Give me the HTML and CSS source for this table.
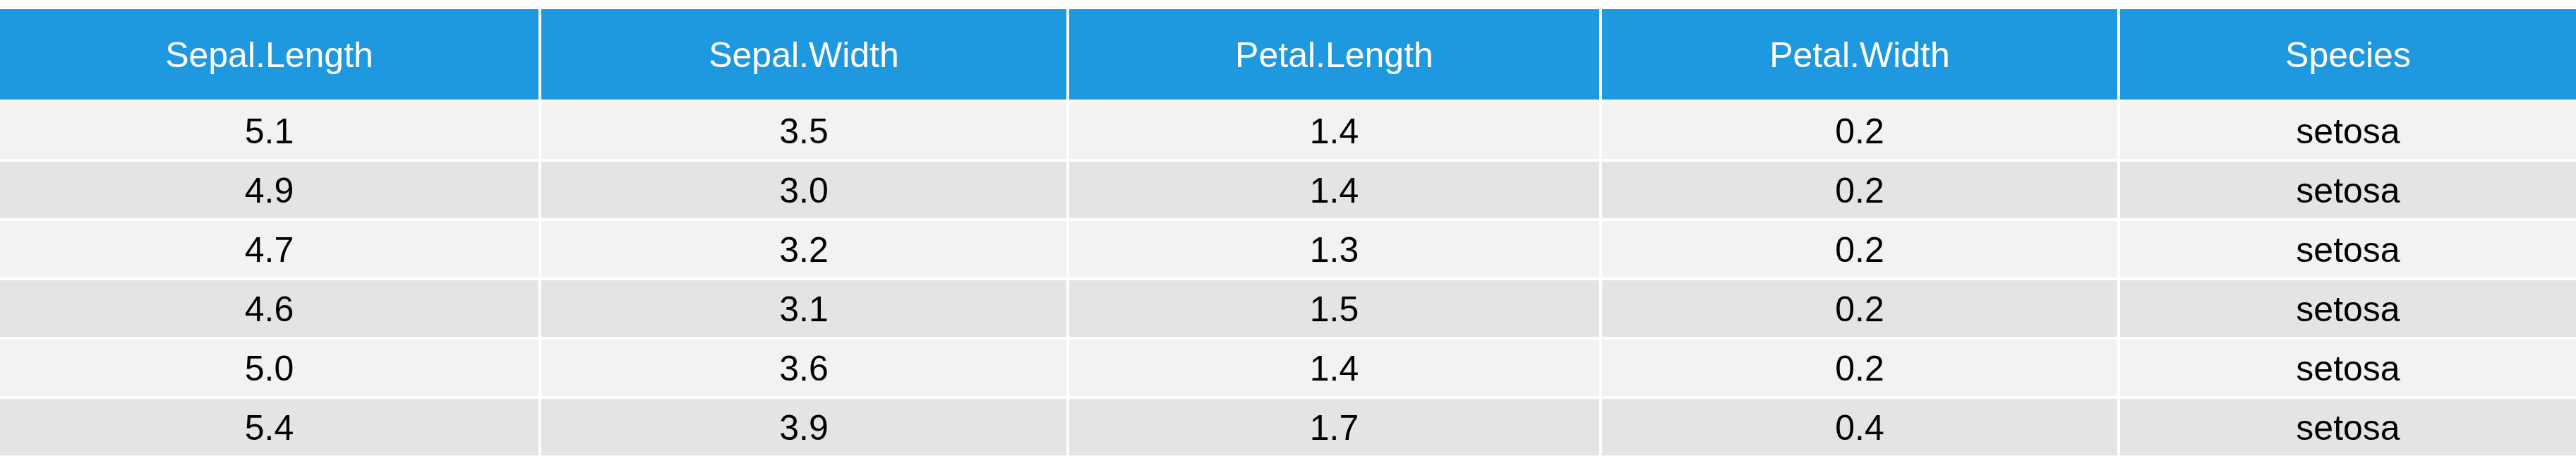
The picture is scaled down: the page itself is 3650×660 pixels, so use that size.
FILE: index.html
```html
<!DOCTYPE html>
<html lang="en">
<head>
<meta charset="utf-8">
<title>iris</title>
<link rel="stylesheet" href="styles.css">
</head>
<body>
<div class="table">
  <div class="th">Sepal.Length</div>
  <div class="th">Sepal.Width</div>
  <div class="th">Petal.Length</div>
  <div class="th">Petal.Width</div>
  <div class="th">Species</div>

  <div class="td odd">5.1</div><div class="td odd">3.5</div><div class="td odd">1.4</div><div class="td odd">0.2</div><div class="td odd">setosa</div>
  <div class="td even">4.9</div><div class="td even">3.0</div><div class="td even">1.4</div><div class="td even">0.2</div><div class="td even">setosa</div>
  <div class="td odd">4.7</div><div class="td odd">3.2</div><div class="td odd">1.3</div><div class="td odd">0.2</div><div class="td odd">setosa</div>
  <div class="td even">4.6</div><div class="td even">3.1</div><div class="td even">1.5</div><div class="td even">0.2</div><div class="td even">setosa</div>
  <div class="td odd">5.0</div><div class="td odd">3.6</div><div class="td odd">1.4</div><div class="td odd">0.2</div><div class="td odd">setosa</div>
  <div class="td even">5.4</div><div class="td even">3.9</div><div class="td even">1.7</div><div class="td even">0.4</div><div class="td even">setosa</div>
</div>
</body>
</html>
```
FILE: styles.css
```css
html, body {
  margin: 0;
  padding: 0;
  background: #ffffff;
}
body {
  padding-top: 13px;
  font-family: "Liberation Sans", Arial, sans-serif;
  font-size: 50px;
}
.table {
  display: grid;
  grid-template-columns: 763px 744px 751px 730px 1fr;
  grid-template-rows: 128px repeat(6, 80px);
  gap: 4px;
  width: 3650px;
}
.th, .td {
  display: flex;
  align-items: center;
  justify-content: center;
  padding-top: 2px;
  box-sizing: border-box;
}
.th {
  background: #1e98de;
  color: #ffffff;
}
.td {
  color: #000000;
}
.odd {
  background: #f2f2f2;
}
.even {
  background: #e4e4e4;
}
```
